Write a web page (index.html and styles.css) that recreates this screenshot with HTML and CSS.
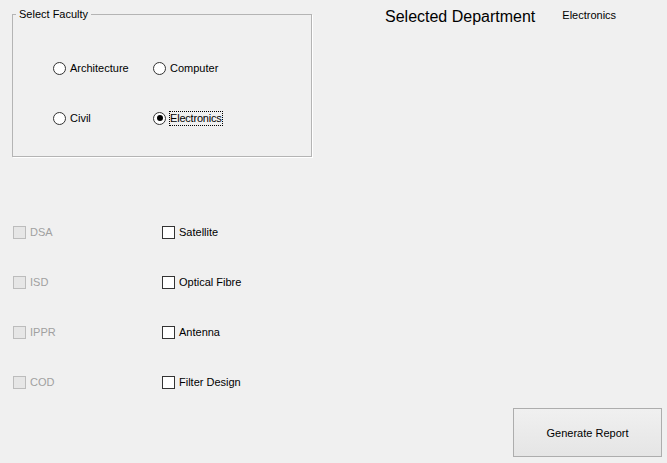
FILE: index.html
```html
<!DOCTYPE html>
<html>
<head>
<meta charset="utf-8">
<link rel="stylesheet" href="styles.css">
</head>
<body>
<div class="form">
  <div class="top">
    <fieldset class="group">
      <legend class="group-label">Select Faculty</legend>
      <div class="radios">
        <label class="opt"><span class="radio"></span><span class="txt">Architecture</span></label>
        <label class="opt"><span class="radio"></span><span class="txt">Computer</span></label>
        <label class="opt"><span class="radio"></span><span class="txt">Civil</span></label>
        <label class="opt"><span class="radio checked"></span><span class="txt focus">Electronics</span></label>
      </div>
    </fieldset>
    <div class="heading">
      <span class="title">Selected Department</span>
      <span class="value">Electronics</span>
    </div>
  </div>
  <div class="checks">
    <label class="opt disabled"><span class="box"></span><span class="txt">DSA</span></label>
    <label class="opt"><span class="box"></span><span class="txt">Satellite</span></label>
    <label class="opt disabled"><span class="box"></span><span class="txt">ISD</span></label>
    <label class="opt"><span class="box"></span><span class="txt">Optical Fibre</span></label>
    <label class="opt disabled"><span class="box"></span><span class="txt">IPPR</span></label>
    <label class="opt"><span class="box"></span><span class="txt">Antenna</span></label>
    <label class="opt disabled"><span class="box"></span><span class="txt">COD</span></label>
    <label class="opt"><span class="box"></span><span class="txt">Filter Design</span></label>
  </div>
  <div class="actions">
    <button class="btn">Generate Report</button>
  </div>
</div>
</body>
</html>
```
FILE: styles.css
```css
html, body {
  margin: 0;
  padding: 0;
  background: #f0f0f0;
}
body {
  width: 667px;
  height: 463px;
  overflow: hidden;
  font-family: "Liberation Sans", Arial, sans-serif;
  font-size: 11px;
  color: #000;
}
.form {
  display: flex;
  flex-direction: column;
}
.top {
  display: flex;
  align-items: flex-start;
}
.group {
  margin: 8px 0 0 12px;
  padding: 0;
  width: 300px;
  height: 149px;
  box-sizing: border-box;
  border: 1px solid #b4b4b4;
  box-shadow: 1px 1px 0 #ffffff;
  min-width: 0;
}
.group-label {
  margin-left: 3px;
  padding: 0 3px;
  line-height: 13px;
  font-size: 11px;
}
.radios {
  display: grid;
  grid-template-columns: 100px 100px;
  grid-auto-rows: 50px;
  padding: 40px 0 0 40px;
}
.opt {
  display: flex;
  align-items: center;
  height: 14px;
  line-height: 13px;
}
.radio {
  width: 13px;
  height: 13px;
  box-sizing: border-box;
  border: 1px solid #333333;
  border-radius: 50%;
  background: #ffffff;
  display: flex;
  align-items: center;
  justify-content: center;
  flex: none;
}
.radio.checked::after {
  content: "";
  width: 6px;
  height: 6px;
  border-radius: 50%;
  background: #000000;
}
.opt .txt {
  margin-left: 4px;
}
.txt.focus {
  outline: 1px dotted #000;
  outline-offset: 0;
  letter-spacing: -0.2px;
}
.heading {
  display: flex;
  align-items: flex-start;
  margin: 7px 0 0 73px;
}
.title {
  font-size: 16px;
  line-height: 19px;
}
.value {
  margin: 2px 0 0 27px;
  font-size: 11px;
  line-height: 13px;
}
.checks {
  display: grid;
  grid-template-columns: 149px 150px;
  grid-auto-rows: 50px;
  margin: 68px 0 0 13px;
}
.box {
  width: 13px;
  height: 13px;
  box-sizing: border-box;
  border: 1px solid #333333;
  background: #ffffff;
  flex: none;
}
.disabled .box {
  border-color: #bcbcbc;
  background: #e6e6e6;
}
.disabled .txt {
  color: #a0a0a0;
}
.actions {
  display: flex;
  justify-content: flex-end;
  padding-right: 5px;
  margin-top: -17px;
}
.btn {
  width: 149px;
  height: 49px;
  box-sizing: border-box;
  border: 1px solid #adadad;
  background: linear-gradient(#f0f0f0, #e5e5e5);
  font-family: "Liberation Sans", Arial, sans-serif;
  font-size: 11px;
  color: #000;
  padding: 0;
}
```
